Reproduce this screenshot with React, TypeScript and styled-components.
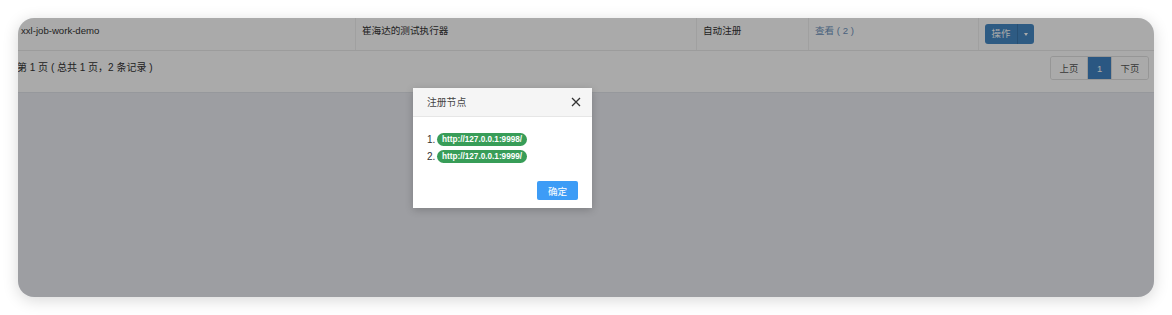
import { createGlobalStyle, styled } from "styled-components";

const GlobalStyle = createGlobalStyle`
    html, body {
        margin: 0;
        padding: 0;
        background: #ffffff;
    }
    body {
        font-family: "Liberation Sans", "Noto Sans CJK SC", sans-serif;
        color: #333;
    }
`;

interface Column {
    width: number;
    text: string;
    kind?: "link" | "action";
}

const columns: Column[] = [
    { width: 337, text: "xxl-job-work-demo" },
    { width: 341, text: "崔海达的测试执行器" },
    { width: 112, text: "自动注册" },
    { width: 170, text: "查看 ( 2 )", kind: "link" },
    { width: 176, text: "操作", kind: "action" },
];

const nodes = ["http://127.0.0.1:9998/", "http://127.0.0.1:9999/"];

export default function App() {
    return (
        <Page>
            <GlobalStyle />
            <Card>
                <Panel>
                    <Row>
                        {columns.map((col, i) => (
                            <Cell key={col.text} $width={col.width} $first={i === 0}>
                                {col.kind === "link" && <Link>{col.text}</Link>}
                                {col.kind === "action" && (
                                    <SplitButton>
                                        <SplitMain>{col.text}</SplitMain>
                                        <SplitCaret>
                                            <Caret />
                                        </SplitCaret>
                                    </SplitButton>
                                )}
                                {!col.kind && col.text}
                            </Cell>
                        ))}
                    </Row>
                    <Footer>
                        <PageInfo>第 1 页 ( 总共 1 页，2 条记录 )</PageInfo>
                        <Pager>
                            <PageItem $wide>上页</PageItem>
                            <PageItem $active>1</PageItem>
                            <PageItem $wide>下页</PageItem>
                        </Pager>
                    </Footer>
                </Panel>
                <Backdrop />
                <Modal>
                    <ModalHeader>
                        <ModalTitle>注册节点</ModalTitle>
                        <Close aria-label="close">
                            <svg width="10" height="10" viewBox="0 0 10 10">
                                <path d="M1 1 L9 9 M9 1 L1 9" stroke="#333" strokeWidth="1.3" />
                            </svg>
                        </Close>
                    </ModalHeader>
                    <ModalBody>
                        {nodes.map((url, i) => (
                            <NodeItem key={url}>
                                <NodeIndex>{i + 1}.</NodeIndex>
                                <Badge>{url}</Badge>
                            </NodeItem>
                        ))}
                    </ModalBody>
                    <ModalFooter>
                        <OkButton>确定</OkButton>
                    </ModalFooter>
                </Modal>
            </Card>
        </Page>
    );
}

const Page = styled.div`
    padding: 18px;
`;

const Card = styled.div`
    position: relative;
    width: 1136px;
    height: 279px;
    border-radius: 16px;
    overflow: hidden;
    background: #eceef4;
    box-shadow: 0 3px 16px rgba(0, 0, 0, 0.16);
`;

const Panel = styled.div`
    background: #ffffff;
    border-bottom: 1px solid #e2e4ea;
    font-size: 9.6px;
`;

const Row = styled.div`
    display: flex;
    height: 32px;
    border-bottom: 1px solid #ebebeb;
`;

const Cell = styled.div<{ $width: number; $first?: boolean }>`
    width: ${(p) => p.$width}px;
    box-sizing: border-box;
    padding: 7px 0 0 ${(p) => (p.$first ? 3 : 6)}px;
    border-left: ${(p) => (p.$first ? "none" : "1px solid #f0f0f0")};
    line-height: 12px;
    color: #333;
`;

const Link = styled.span`
    color: #6d93bd;
`;

const SplitButton = styled.div`
    display: inline-flex;
    height: 20px;
    margin-top: -1px;
    border-radius: 3px;
    overflow: hidden;
    background: #4689c5;
`;

const SplitMain = styled.span`
    width: 32px;
    display: flex;
    align-items: center;
    justify-content: center;
    color: #ffffff;
    font-size: 9.4px;
    border-right: 1px solid #3b77ad;
`;

const SplitCaret = styled.span`
    width: 16px;
    display: flex;
    align-items: center;
    justify-content: center;
`;

const Caret = styled.span`
    width: 0;
    height: 0;
    border-left: 2.5px solid transparent;
    border-right: 2.5px solid transparent;
    border-top: 3px solid #ffffff;
`;

const Footer = styled.div`
    display: flex;
    align-items: flex-start;
    justify-content: space-between;
    height: 41px;
    box-sizing: border-box;
    padding: 5px 5px 0 0;
`;

const PageInfo = styled.span`
    margin-left: -1px;
    line-height: 24px;
    color: #333;
    font-size: 10px;
`;

const Pager = styled.div`
    display: flex;
    height: 22px;
    border: 1px solid #e1e1e1;
    border-radius: 3px;
    overflow: hidden;
`;

const PageItem = styled.span<{ $active?: boolean; $wide?: boolean }>`
    width: ${(p) => (p.$wide ? 36 : 23)}px;
    display: flex;
    align-items: center;
    justify-content: center;
    font-size: 9.4px;
    background: ${(p) => (p.$active ? "#3f83c3" : "#ffffff")};
    color: ${(p) => (p.$active ? "#ffffff" : "#555")};
    & + & {
        border-left: 1px solid #e1e1e1;
    }
`;

const Backdrop = styled.div`
    position: absolute;
    inset: 0;
    background: rgba(0, 0, 0, 0.335);
`;

const Modal = styled.div`
    position: absolute;
    left: 395px;
    top: 70px;
    width: 179px;
    background: #ffffff;
    box-shadow: 0 2px 8px rgba(0, 0, 0, 0.2);
`;

const ModalHeader = styled.div`
    display: flex;
    align-items: center;
    justify-content: space-between;
    height: 28px;
    padding: 0 11px 0 14px;
    background: #f5f5f5;
    border-bottom: 1px solid #e6e6e6;
`;

const ModalTitle = styled.span`
    font-size: 9.8px;
    color: #444;
`;

const Close = styled.span`
    display: flex;
    align-items: center;
`;

const ModalBody = styled.ol`
    margin: 0;
    padding: 16px 14px 0;
    list-style: none;
    display: flex;
    flex-direction: column;
    gap: 4px;
`;

const NodeItem = styled.li`
    display: flex;
    align-items: center;
    gap: 2px;
    height: 13px;
`;

const NodeIndex = styled.span`
    font-size: 10px;
    color: #333;
    width: 8px;
`;

const Badge = styled.span`
    display: inline-flex;
    align-items: center;
    height: 13px;
    padding: 0 5px;
    border-radius: 7px;
    background: #389d58;
    color: #ffffff;
    font-size: 8.2px;
    font-weight: 700;
`;

const ModalFooter = styled.div`
    display: flex;
    justify-content: flex-end;
    padding: 18px 14px 8px;
`;

const OkButton = styled.span`
    width: 41px;
    height: 19px;
    display: flex;
    align-items: center;
    justify-content: center;
    border-radius: 2px;
    background: #3d9cf6;
    color: #ffffff;
    font-size: 9.6px;
`;
